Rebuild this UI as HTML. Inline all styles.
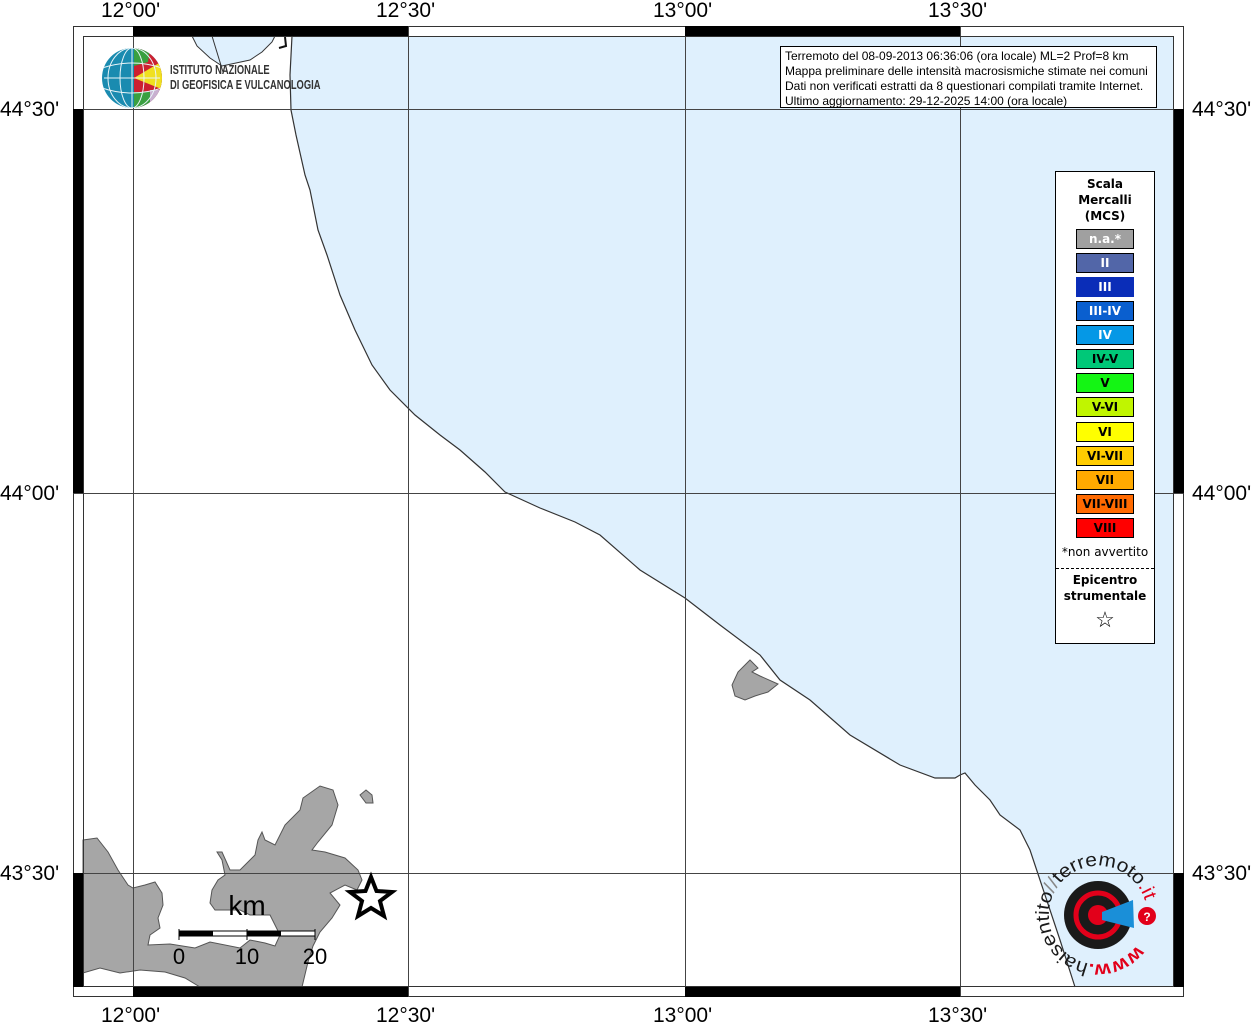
<!DOCTYPE html>
<html><head><meta charset="utf-8"><style>
html,body{margin:0;padding:0;background:#fff;}
body{width:1257px;height:1024px;position:relative;overflow:hidden;font-family:"Liberation Sans",sans-serif;}
.lab{position:absolute;font-size:21px;color:#000;line-height:1;}
</style></head><body>
<svg width="1257" height="1024" style="position:absolute;left:0;top:0" xmlns="http://www.w3.org/2000/svg">
<polygon fill="#dff0fd" points="292,36 290,75 291,110 296,135 305,175 310,190 318,230 327,255 340,295 355,330 372,365 390,390 415,415 440,435 460,450 485,472 505,492 540,508 575,522 600,535 640,570 685,598 720,625 760,655 780,680 810,700 850,735 900,765 935,778 955,778 960,775 965,773 975,785 990,800 1000,815 1020,830 1030,850 1040,880 1060,940 1075,987 1174,987 1174,36"/>
<polyline fill="none" stroke="#333" stroke-width="1.2" points="292,36 290,75 291,110 296,135 305,175 310,190 318,230 327,255 340,295 355,330 372,365 390,390 415,415 440,435 460,450 485,472 505,492 540,508 575,522 600,535 640,570 685,598 720,625 760,655 780,680 810,700 850,735 900,765 935,778 955,778 960,775 965,773 975,785 990,800 1000,815 1020,830 1030,850 1040,880 1060,940 1075,987"/>
<polygon fill="#dff0fd" stroke="#333" stroke-width="1" points="192,36 197,46 210,58 222,66 250,60 262,52 272,42 275,36"/>
<line x1="212" y1="36" x2="223" y2="72" stroke="#333" stroke-width="1"/>
<path d="M285 37 L286 46 L279 48" fill="none" stroke="#111" stroke-width="2"/>
<polygon fill="#a6a6a6" stroke="#555" stroke-width="1" points="83,840 97,838 108,852 118,870 128,885 133,888 145,885 155,882 162,893 163,905 158,918 160,928 150,935 148,945 170,944 195,948 210,942 240,948 250,940 265,943 275,946 280,935 270,915 250,915 240,910 215,910 210,903 212,890 218,880 225,875 222,860 217,852 222,852 230,870 240,870 255,855 258,840 262,832 265,840 275,845 285,825 300,810 303,798 320,786 333,790 338,805 332,825 318,842 312,850 325,852 345,858 358,870 362,880 357,890 345,885 330,893 340,905 332,918 320,932 313,946 308,962 302,987 200,987 185,978 165,972 140,970 120,973 100,968 83,973"/>
<polygon fill="#a6a6a6" stroke="#555" stroke-width="1" points="360,795 366,790 372,795 373,803 366,803"/>
<polygon fill="#a6a6a6" stroke="#555" stroke-width="1" points="750,660 758,668 752,672 760,676 778,684 768,692 755,696 745,700 735,696 732,685 738,672"/>
<g stroke="#444" stroke-width="1">
<line x1="133.5" y1="26" x2="133.5" y2="997"/><line x1="408.5" y1="26" x2="408.5" y2="997"/>
<line x1="685.5" y1="26" x2="685.5" y2="997"/><line x1="960.5" y1="26" x2="960.5" y2="997"/>
<line x1="73" y1="109.5" x2="1184" y2="109.5"/><line x1="73" y1="493.5" x2="1184" y2="493.5"/>
<line x1="73" y1="873.5" x2="1184" y2="873.5"/>
</g>
<rect x="73.5" y="26.5" width="1110" height="970" fill="none" stroke="#333" stroke-width="1"/>
<rect x="83.5" y="36.5" width="1090" height="950" fill="none" stroke="#333" stroke-width="1"/>
<g fill="#000">
<rect x="133" y="26" width="275" height="10"/><rect x="685" y="26" width="275" height="10"/>
<rect x="133" y="987" width="275" height="10"/><rect x="685" y="987" width="275" height="10"/>
<rect x="73" y="109" width="10" height="384"/><rect x="73" y="873" width="10" height="114"/>
<rect x="1174" y="109" width="10" height="384"/><rect x="1174" y="873" width="10" height="114"/>
</g>
<rect x="179" y="931" width="136" height="5" fill="#fff" stroke="#000" stroke-width="1"/>
<rect x="179" y="931" width="34" height="5" fill="#000"/><rect x="247" y="931" width="34" height="5" fill="#000"/>
<line x1="179" y1="929" x2="179" y2="940" stroke="#000"/><line x1="247" y1="929" x2="247" y2="940" stroke="#000"/><line x1="315" y1="929" x2="315" y2="940" stroke="#000"/>
<text x="247" y="915" font-size="28" text-anchor="middle" font-family="Liberation Sans">km</text>
<text x="179" y="964" font-size="22" text-anchor="middle" font-family="Liberation Sans">0</text>
<text x="247" y="964" font-size="22" text-anchor="middle" font-family="Liberation Sans">10</text>
<text x="315" y="964" font-size="22" text-anchor="middle" font-family="Liberation Sans">20</text>
<polygon points="371,877 376.5,891 392,892 380,901 384,916 371,908 358,916 362,901 350,892 365.5,891" fill="#fff" stroke="#000" stroke-width="4"/>
<defs><clipPath id="g"><circle cx="132" cy="78" r="30"/></clipPath></defs>
<g clip-path="url(#g)">
<rect x="100" y="46" width="64" height="64" fill="#1a8bb0"/>
<polygon points="134,48 164,48 164,110 134,110" fill="#cc2030"/>
<polygon points="134,78 164,60 164,90" fill="#f0e020"/>
<polygon points="134,48 150,48 148,62 134,66" fill="#3aa040"/>
<polygon points="150,90 164,90 164,110 150,110" fill="#c8b0d0"/>
<polygon points="134,92 150,92 150,110 134,110" fill="#3aa040"/>
<g stroke="#e8f4f8" stroke-width="1" fill="none"><ellipse cx="132" cy="78" rx="12" ry="30"/><ellipse cx="132" cy="78" rx="24" ry="30"/><line x1="132" y1="48" x2="132" y2="108"/><path d="M102 68 Q132 58 162 68 M102 88 Q132 98 162 88 M104 78 H160"/></g>
</g>
<circle cx="1098" cy="915" r="34" fill="#1a1a1a"/>
<circle cx="1098" cy="915" r="22" fill="none" stroke="#e2001a" stroke-width="5"/>
<circle cx="1098" cy="915" r="10" fill="#e2001a"/>
<polygon points="1102,912 1133,900 1134,928 1102,920" fill="#1a8fd8"/>
<circle cx="1147" cy="916" r="9" fill="#e2001a"/>
<text x="1147" y="921" font-size="12" fill="#fff" text-anchor="middle" font-weight="bold" font-family="Liberation Sans">?</text>
<path id="circ" d="M1137,945 A49,49 0 1,1 1059,885 A49,49 0 1,1 1137,945" fill="none"/>
<text font-size="19" font-family="Liberation Sans" fill="#1a1a1a"><textPath href="#circ" textLength="262" lengthAdjust="spacingAndGlyphs"><tspan fill="#e2001a" font-weight="bold">www.</tspan>haisentito<tspan fill="#888">//</tspan>terremoto<tspan fill="#e2001a">.it</tspan></textPath></text>
</svg>
<div style="position:absolute;left:170px;top:62px;font-size:13px;line-height:15px;color:#333;font-weight:bold;font-family:'Liberation Sans Narrow','Liberation Sans',sans-serif;transform:scaleX(0.72);transform-origin:0 0;white-space:nowrap;">ISTITUTO NAZIONALE<br>DI GEOFISICA E VULCANOLOGIA</div>
<div class="lab" style="left:101px;top:0px">12°00'</div>
<div class="lab" style="left:376px;top:0px">12°30'</div>
<div class="lab" style="left:653px;top:0px">13°00'</div>
<div class="lab" style="left:928px;top:0px">13°30'</div>
<div class="lab" style="left:101px;top:1005px">12°00'</div>
<div class="lab" style="left:376px;top:1005px">12°30'</div>
<div class="lab" style="left:653px;top:1005px">13°00'</div>
<div class="lab" style="left:928px;top:1005px">13°30'</div>
<div class="lab" style="left:0px;top:99px">44°30'</div>
<div class="lab" style="left:0px;top:483px">44°00'</div>
<div class="lab" style="left:0px;top:863px">43°30'</div>
<div class="lab" style="left:1192px;top:99px">44°30'</div>
<div class="lab" style="left:1192px;top:483px">44°00'</div>
<div class="lab" style="left:1192px;top:863px">43°30'</div>
<div style="position:absolute;left:780px;top:46px;width:377px;height:62px;background:#fff;border:1px solid #000;font-size:12px;line-height:15px;padding:2px 0 0 4px;box-sizing:border-box;white-space:nowrap;overflow:hidden;">Terremoto del 08-09-2013 06:36:06 (ora locale) ML=2 Prof=8 km<br>Mappa preliminare delle intensità macrosismiche stimate nei comuni<br>Dati non verificati estratti da 8 questionari compilati tramite Internet.<br>Ultimo aggiornamento: 29-12-2025 14:00 (ora locale)</div>
<div style="position:absolute;left:1055px;top:171px;width:100px;height:473px;background:#fff;border:1px solid #000;box-sizing:border-box;font-family:'DejaVu Sans',sans-serif;">
<div style="text-align:center;font-size:12px;font-weight:bold;line-height:16px;margin-top:4px;">Scala<br>Mercalli<br>(MCS)</div>
</div>
<div style="position:absolute;left:1055px;top:545px;width:100px;text-align:center;font-family:'DejaVu Sans',sans-serif;font-size:12px;">*non avvertito</div>
<div style="position:absolute;left:1056px;top:568px;width:98px;border-top:1px dashed #000;"></div>
<div style="position:absolute;left:1055px;top:572px;width:100px;text-align:center;font-family:'DejaVu Sans',sans-serif;font-size:12px;font-weight:bold;line-height:16px;">Epicentro<br>strumentale</div>
<div style="position:absolute;left:1055px;top:607px;width:100px;text-align:center;font-size:22px;">☆</div>
<div style="position:absolute;left:1076px;top:229px;font-family:'DejaVu Sans',sans-serif;font-size:12px;font-weight:bold;">
<div style="position:absolute;top:0;width:56px;height:18px;border:1px solid #000;background:#a0a0a0;color:#fff;text-align:center;line-height:18px">n.a.*</div>
<div style="position:absolute;top:24px;width:56px;height:18px;border:1px solid #000;background:#5266a8;color:#fff;text-align:center;line-height:18px">II</div>
<div style="position:absolute;top:48px;width:58px;height:20px;background:#0a2db8;color:#fff;text-align:center;line-height:20px">III</div>
<div style="position:absolute;top:72px;width:56px;height:18px;border:1px solid #000;background:#0a5fcf;color:#fff;text-align:center;line-height:18px">III-IV</div>
<div style="position:absolute;top:96px;width:56px;height:18px;border:1px solid #000;background:#0598e6;color:#fff;text-align:center;line-height:18px">IV</div>
<div style="position:absolute;top:120px;width:56px;height:18px;border:1px solid #000;background:#00c878;color:#000;text-align:center;line-height:18px">IV-V</div>
<div style="position:absolute;top:144px;width:56px;height:18px;border:1px solid #000;background:#14f514;color:#000;text-align:center;line-height:18px">V</div>
<div style="position:absolute;top:168px;width:56px;height:18px;border:1px solid #000;background:#c0f500;color:#000;text-align:center;line-height:18px">V-VI</div>
<div style="position:absolute;top:193px;width:56px;height:18px;border:1px solid #000;background:#ffff00;color:#000;text-align:center;line-height:18px">VI</div>
<div style="position:absolute;top:217px;width:56px;height:18px;border:1px solid #000;background:#ffcc00;color:#000;text-align:center;line-height:18px">VI-VII</div>
<div style="position:absolute;top:241px;width:56px;height:18px;border:1px solid #000;background:#ffaa00;color:#000;text-align:center;line-height:18px">VII</div>
<div style="position:absolute;top:265px;width:56px;height:18px;border:1px solid #000;background:#ff6a00;color:#000;text-align:center;line-height:18px">VII-VIII</div>
<div style="position:absolute;top:289px;width:56px;height:18px;border:1px solid #000;background:#ff0000;color:#000;text-align:center;line-height:18px">VIII</div>
</div>
</body></html>
